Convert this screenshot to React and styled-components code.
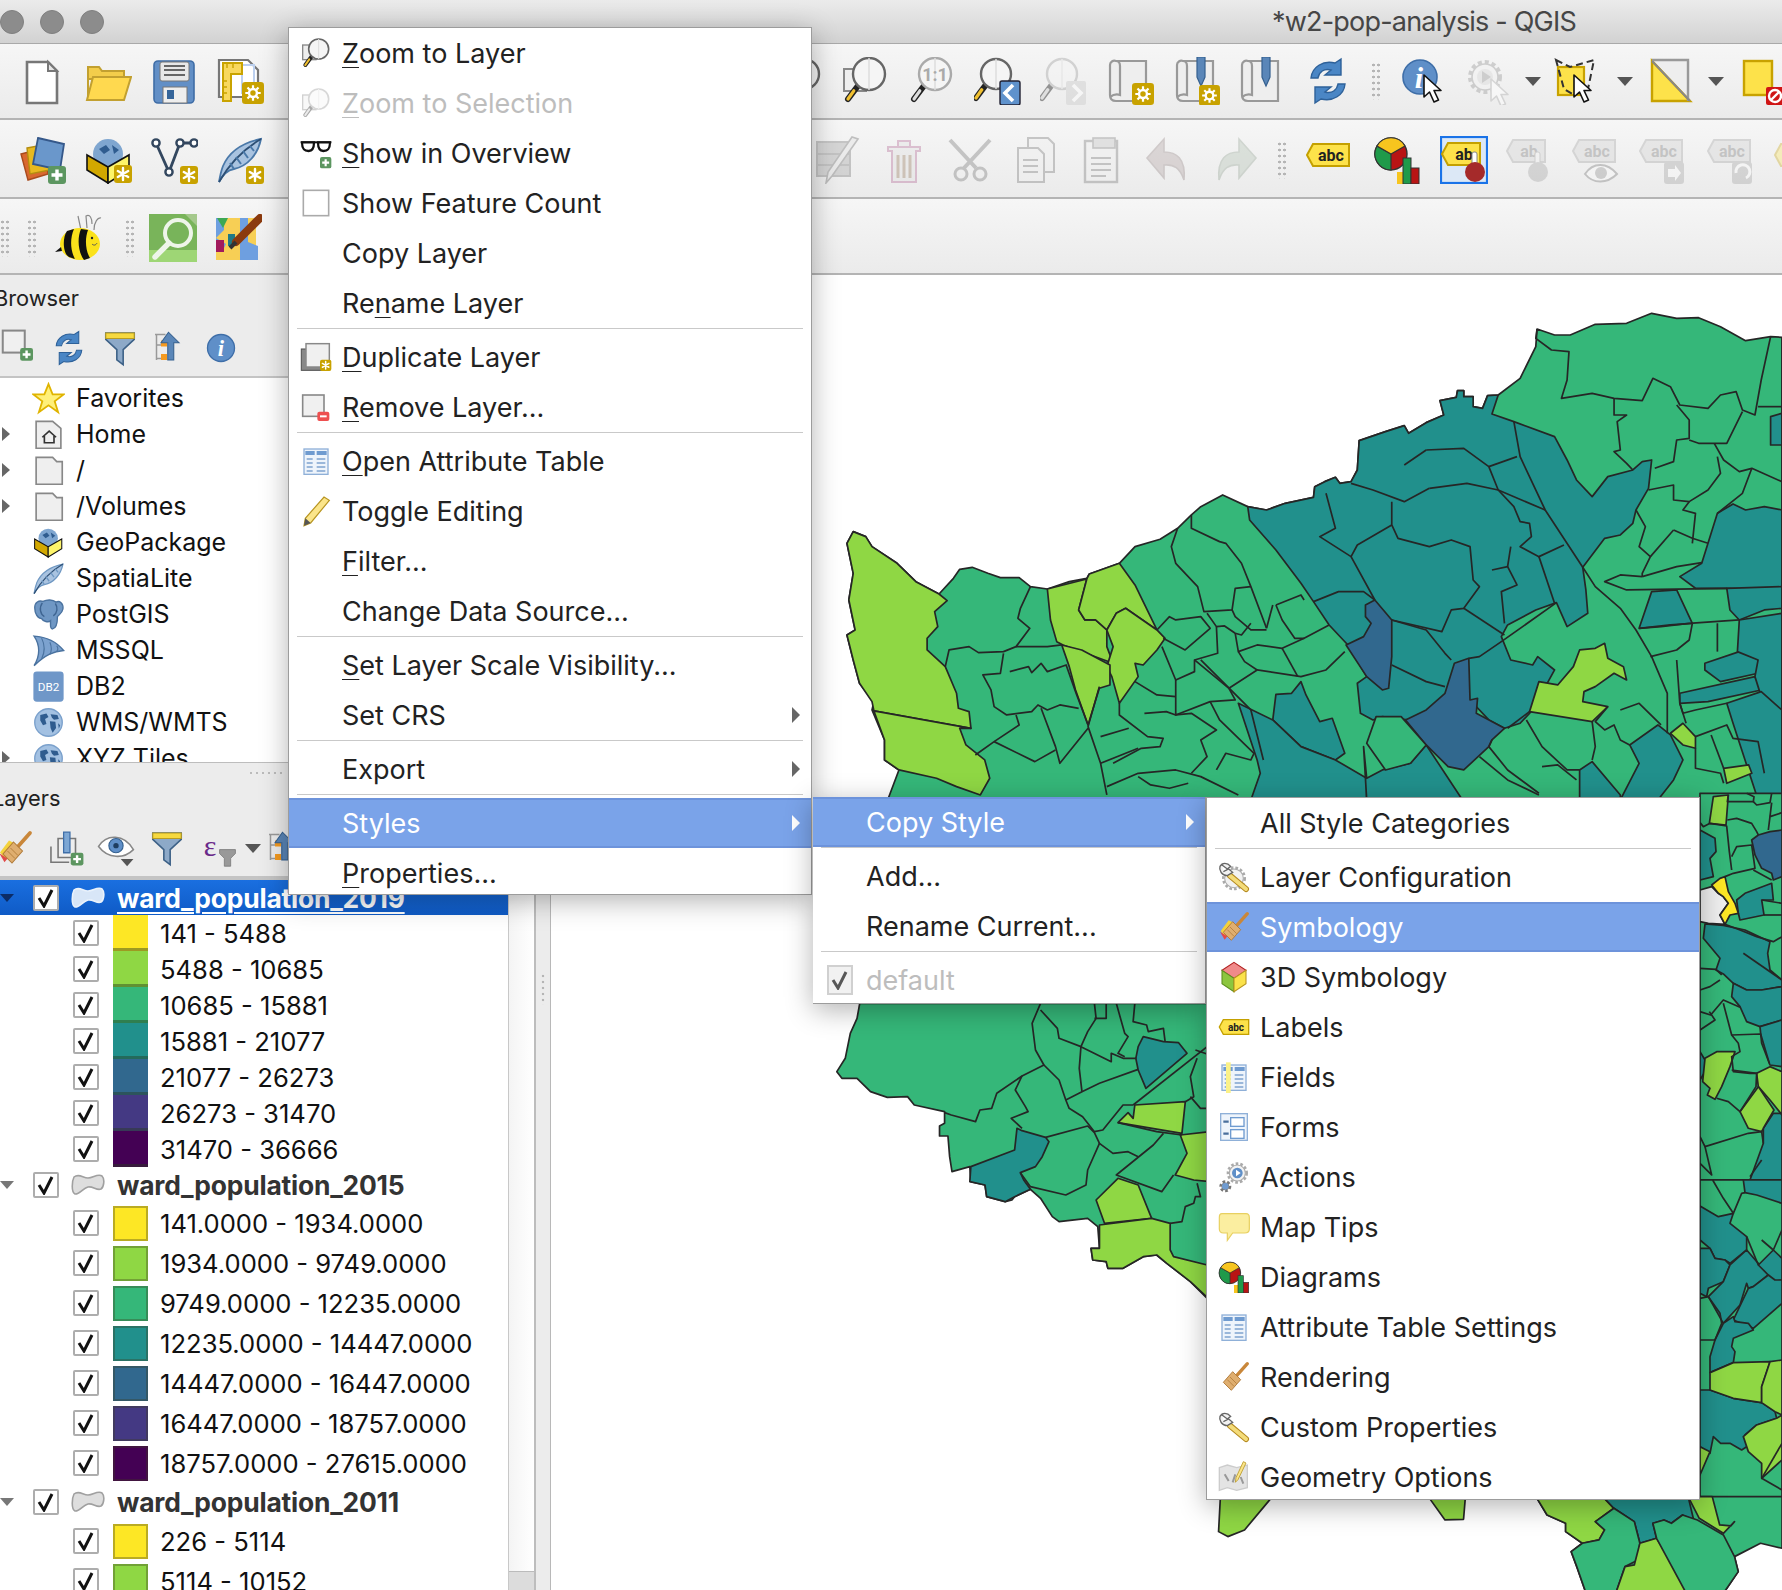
import React from "react";
import styled, { createGlobalStyle } from "styled-components";

const GlobalStyle = createGlobalStyle`
  html, body {
    margin: 0;
    padding: 0;
    width: 1782px;
    height: 1590px;
    overflow: hidden;
    background: #ececec;
    font-family: "Inter", "Liberation Sans", sans-serif;
  }
`;

/* ---------- icon helpers ---------- */

const Ico = ({ size = 48, children, dim }) => (
  <svg width={size} height={size} viewBox="0 0 48 48" opacity={dim ? 0.32 : 1}>
    {children}
  </svg>
);

const Badge = ({ x = 28, y = 28, s = 18 }) => (
  <g transform={`translate(${x} ${y}) scale(${s / 18})`}>
    <rect width="18" height="18" rx="3" fill="#c8a200" />
    <path d="M9 3V15M3.8 6L14.2 12M14.2 6L3.8 12" stroke="#fff" strokeWidth="2.4" strokeLinecap="round" />
  </g>
);

const GearBadge = ({ x = 28, y = 28, s = 20 }) => (
  <g transform={`translate(${x} ${y}) scale(${s / 20})`}>
    <rect width="20" height="20" rx="3" fill="#c8a200" />
    <circle cx="10" cy="10" r="3.6" fill="none" stroke="#fff" strokeWidth="2.2" />
    <path d="M10 3V6M10 14V17M3 10H6M14 10H17M5 5L7 7M13 13L15 15M15 5L13 7M7 13L5 15" stroke="#fff" strokeWidth="2" />
  </g>
);

const PlusBadge = ({ x = 30, y = 30, s = 18 }) => (
  <g transform={`translate(${x} ${y}) scale(${s / 18})`}>
    <rect width="18" height="18" rx="3" fill="#5c9660" />
    <path d="M9 3.5V14.5M3.5 9H14.5" stroke="#fff" strokeWidth="3.4" />
  </g>
);

const Cursor = ({ x = 22, y = 20, s = 1, gray }) => (
  <path
    transform={`translate(${x} ${y}) scale(${s})`}
    d="M0 0V22L5.5 17L10 27L14.5 25L10 15.5H17Z"
    fill="#fff"
    stroke={gray ? "#bbb" : "#111"}
    strokeWidth="1.6"
    strokeLinejoin="round"
  />
);

const Mag = ({ cx = 28, cy = 18, r = 15, stroke = "#666", grip = "#f0c030" }) => (
  <g>
    <path d={`M${cx - r * 0.7} ${cy + r * 0.75}L${cx - r - 5} ${cy + r + 9}`} stroke="#222" strokeWidth="6" strokeLinecap="round" />
    <path d={`M${cx - r * 0.95} ${cy + r * 1.05}L${cx - r - 5} ${cy + r + 9}`} stroke={grip} strokeWidth="3.2" strokeLinecap="round" />
    <circle cx={cx} cy={cy} r={r} fill="#f5f5f5" stroke={stroke} strokeWidth="2.4" />
    <path d={`M${cx} ${cy - r}V${cy + r}`} stroke="#ddd" strokeWidth="1.5" />
  </g>
);

const Tag = ({ label = "abc", x = 3, y = 10, fill = "#fde24a", line = "#c4a000", ink = "#222", w = 42, size = 16 }) => (
  <g transform={`translate(${x} ${y})`}>
    <path d={`M6 0H${w}V22H6L0 11Z`} fill={fill} stroke={line} strokeWidth="2" />
    <text x={w / 2 + 3} y="16.5" textAnchor="middle" fontFamily="Roboto, sans-serif" fontWeight="700" fontSize={size} fill={ink}>
      {label}
    </text>
  </g>
);

const Globe = ({ cx = 24, cy = 24, r = 20 }) => (
  <g>
    <circle cx={cx} cy={cy} r={r} fill="#a3c1e2" stroke="#7ba1cc" strokeWidth="2" />
    <path
      transform={`translate(${cx - 20} ${cy - 20}) scale(${r / 20})`}
      d="M8 9L17 7L20 12L15 15L17 22L12 24L8 17ZM23 8L33 9L35 15L28 16L25 13ZM22 18L30 19L31 28L26 35L23 28ZM34 21L37 24L35 29Z"
      fill="#2f5c8f"
    />
  </g>
);

const Box = ({ s = 1, x = 0, y = 0 }) => (
  <g transform={`translate(${x} ${y}) scale(${s})`}>
    <circle cx="24" cy="18" r="15" fill="#7fa6d0" />
    <path d="M15 13L22 9L26 14L20 18ZM28 9L35 14L30 18Z" fill="#2f5c8f" />
    <path d="M3 19L24 31V47L3 34Z" fill="#d2a800" stroke="#111" strokeWidth="1.6" />
    <path d="M24 31L45 19V34L24 47Z" fill="#fdf46a" stroke="#111" strokeWidth="1.6" />
  </g>
);

const Feather = ({ tone = "#4a78a8" }) => (
  <g>
    <path d="M45 3C30 6 14 14 7 30C5 35 4 40 3 46C7 38 12 34 18 33C32 30 42 18 45 3Z" fill="#a9c3e0" stroke={tone} strokeWidth="1.8" />
    <path d="M3 46C12 30 26 14 45 3" stroke="#2d4f74" strokeWidth="1.8" fill="none" />
    <path d="M14 27L18 33M20 21L25 28M27 15L32 22M34 10L38 15" stroke={tone} strokeWidth="2" />
  </g>
);

const Funnel = () => (
  <g>
    <path d="M6 5H42V13L28 26V45L20 39V26L6 13Z" fill="#8da9c8" stroke="#3d6187" strokeWidth="2" />
    <path d="M6 5H42V12H6Z" fill="#f6d93f" stroke="#b89c20" strokeWidth="1.4" />
  </g>
);

const Refresh = () => (
  <g fill="#4a86c5" stroke="#2e6199" strokeWidth="1.4">
    <path d="M7 21C8 10 19 3 31 6L37 2V18H21L27 13C20 11 15 15 14 21Z" />
    <path d="M41 27C40 38 29 45 17 42L11 46V30H27L21 35C28 37 33 33 34 27Z" />
  </g>
);

const Brush = ({ color }) => (
  <g>
    {color && <path d="M4 30L16 14L24 18L12 40Z" fill="#f4d23c" />}
    {color && <path d="M3 31L14 38L10 43Z" fill="#e24a4a" />}
    <path d="M44 4L28 22" stroke="#c9873a" strokeWidth="5" strokeLinecap="round" />
    <path d="M22 16L34 28L20 44L8 32Z" fill="#dfae6f" stroke="#b07a38" strokeWidth="1.4" />
    <path d="M14 28L24 38M18 24L28 34" stroke="#b07a38" strokeWidth="1.2" />
  </g>
);

const Wrench = () => (
  <g>
    <path d="M18 22L42 42" stroke="#b58a20" strokeWidth="9" strokeLinecap="round" />
    <path d="M18 22L42 42" stroke="#f4dc7a" strokeWidth="6" strokeLinecap="round" />
    <path d="M6 6L14 12L19 8C14 2 6 2 3 8C1 14 6 22 14 22L22 17L16 12L8 16" fill="#f2f2f2" stroke="#666" strokeWidth="2" />
  </g>
);

const Gear = ({ cx = 24, cy = 24, r = 14, color = "#aaa" }) => (
  <g>
    <circle cx={cx} cy={cy} r={r + 2} fill="none" stroke={color} strokeWidth="4" strokeDasharray="4 3" />
    <circle cx={cx} cy={cy} r={r} fill="#f2f2f2" stroke={color} strokeWidth="1.6" />
  </g>
);

const Table = () => (
  <g>
    <rect x="6" y="6" width="36" height="38" fill="#eef4fb" stroke="#8fb0d8" strokeWidth="2" />
    <path d="M8 9H22V15H8ZM25 9H40V15H25Z" fill="#6f9bd0" />
    <path d="M10 21H19M25 21H38M10 27H19M25 27H38M10 33H19M25 33H38M10 39H19M25 39H38" stroke="#7fa3cf" strokeWidth="2" />
  </g>
);

const Pie = () => (
  <g>
    <circle cx="18" cy="18" r="16" fill="#b81414" stroke="#333" strokeWidth="1.4" />
    <path d="M18 18L4 10A16 16 0 0 0 18 34Z" fill="#1f9a4a" stroke="#333" strokeWidth="1.2" />
    <path d="M18 18L4 10A16 16 0 0 1 32 10Z" fill="#f7c51e" stroke="#333" strokeWidth="1.2" />
    <rect x="24" y="36" width="6" height="12" fill="#f7c51e" />
    <rect x="30" y="22" width="8" height="26" fill="#1f9a4a" stroke="#333" strokeWidth="1" />
    <rect x="38" y="32" width="8" height="16" fill="#b81414" stroke="#333" strokeWidth="1" />
  </g>
);

const Scroll = ({ children }) => (
  <g>
    <path d="M10 4H40V44H10C6 44 4 42 4 38V8C4 5 7 3 10 4Z" fill="#eee" stroke="#999" strokeWidth="2.2" />
    <path d="M10 4C13 4 14 6 14 9V38C11 37 8 37 4 40" fill="none" stroke="#999" strokeWidth="2.2" />
    {children}
  </g>
);

const Pin = () => <path d="M24 0H32V20L28 29L24 20Z" fill="#5a86b8" stroke="#35608f" strokeWidth="1.2" />;

const MapPencil = () => (
  <g>
    <rect x="2" y="4" width="40" height="42" fill="#f7cf55" />
    <path d="M2 4H10V16L2 24ZM2 24V38H8L12 30ZM26 4L34 4L34 28L44 32V46H26Z" fill="#6e9fe0" />
    <path d="M2 26H10V38H2Z" fill="#a11a5c" />
    <path d="M3 4H14L9 14Z" fill="#3da854" />
    <rect x="14" y="20" width="7" height="12" fill="#1f7a86" />
    <path d="M46 4L22 28" stroke="#8b3a0e" strokeWidth="8" strokeLinecap="round" />
    <path d="M22 28L16 34" stroke="#333" strokeWidth="4" />
  </g>
);

const Blob = ({ light }) => (
  <svg width="34" height="24" viewBox="0 0 34 24">
    <path
      d="M3 4C8 0 12 5 17 5C22 5 27 0 31 3C34 6 33 14 30 16C26 18 22 13 17 14C12 15 8 22 4 21C0 19 1 8 3 4Z"
      fill={light ? "#d8e6f7" : "#dedede"}
      stroke={light ? "#eaf2fb" : "#a0a0a0"}
      strokeWidth="1.6"
    />
  </svg>
);

const Check = () => (
  <svg width="18" height="20" viewBox="0 0 18 20">
    <path d="M2 10L7 18L15 2" fill="none" stroke="#111" strokeWidth="3" />
  </svg>
);

const icons = {
  newDoc: (
    <>
      <path d="M9 5H30L39 14V46H9Z" fill="#fff" stroke="#777" strokeWidth="2.6" />
      <path d="M30 5V14H39Z" fill="#e6e6e6" stroke="#777" strokeWidth="2" />
    </>
  ),
  folder: (
    <>
      <path d="M4 10H15L18 14H40V22H4V42Z" fill="#f3cd4b" stroke="#c2a030" strokeWidth="2" />
      <path d="M9 20H47L40 43H3Z" fill="#ffd94f" stroke="#c2a030" strokeWidth="2" />
    </>
  ),
  save: (
    <>
      <rect x="4" y="4" width="40" height="42" rx="4" fill="#628fc6" stroke="#3f6da6" strokeWidth="1.6" />
      <rect x="10" y="5" width="29" height="19" rx="2" fill="#e8e8e8" stroke="#777" />
      <path d="M14 9H35M14 13H35M14 18H35" stroke="#666" strokeWidth="1.8" />
      <rect x="13" y="30" width="24" height="16" fill="#eee" stroke="#777" />
      <rect x="17" y="33" width="7" height="9" fill="#35659a" />
    </>
  ),
  layout: (
    <>
      <path d="M3 3H32L42 13V40H3Z" fill="#fff" stroke="#777" strokeWidth="2.2" />
      <path d="M26 8H38V36H26Z" fill="none" stroke="#bcd0ef" strokeWidth="2" />
      <path d="M7 6H26V17H15V44H7Z" fill="#f8d85e" stroke="#c9a300" strokeWidth="2" />
      <path d="M7 24H11M7 30H11M7 36H11M11 7V11M17 7V11" stroke="#c9a300" strokeWidth="1.4" />
      <GearBadge x={26} y={25} s={22} />
    </>
  ),
  zoomIn: <Mag cx={29} cy={17} r={15} />,
  zoomFull: (
    <>
      <rect x="3" y="12" width="22" height="22" fill="#eee" stroke="#888" strokeWidth="2" />
      <Mag cx={28} cy={17} r={16} />
    </>
  ),
  zoom11: (
    <>
      <Mag cx={28} cy={17} r={16} stroke="#aaa" grip="#ddd" />
      <text x="28" y="24" textAnchor="middle" fontFamily="Roboto, sans-serif" fontSize="18" fontWeight="700" fill="#aaa">
        1:1
      </text>
    </>
  ),
  zoomLast: (
    <>
      <Mag cx={22} cy={17} r={15} />
      <rect x="26" y="24" width="20" height="24" rx="2" fill="#5f92cc" stroke="#223" strokeWidth="1.4" />
      <path d="M39 28L31 36L39 44" fill="none" stroke="#fff" strokeWidth="3.6" />
    </>
  ),
  zoomNext: (
    <g opacity="0.45">
      <Mag cx={22} cy={17} r={15} stroke="#aaa" grip="#ccc" />
      <rect x="26" y="24" width="20" height="24" rx="2" fill="#ccc" />
      <path d="M33 28L41 36L33 44" fill="none" stroke="#fff" strokeWidth="3.6" />
    </g>
  ),
  scrollNew: (
    <Scroll>
      <GearBadge x={26} y={26} s={22} />
    </Scroll>
  ),
  scrollPin: (
    <Scroll>
      <Pin />
      <GearBadge x={26} y={28} s={21} />
    </Scroll>
  ),
  scrollBook: (
    <Scroll>
      <Pin />
    </Scroll>
  ),
  refresh: <Refresh />,
  identify: (
    <>
      <circle cx="20" cy="20" r="17" fill="#5f8fc8" stroke="#3e6ea8" strokeWidth="1.6" />
      <text x="19" y="31" textAnchor="middle" fontFamily="Liberation Serif, serif" fontStyle="italic" fontWeight="700" fontSize="30" fill="#fff">
        i
      </text>
      <Cursor x={24} y={18} />
    </>
  ),
  action: (
    <g opacity="0.5">
      <Gear cx={20} cy={20} r={13} />
      <circle cx="20" cy="20" r="8" fill="#ddd" />
      <path d="M17 14L26 20L17 26Z" fill="#aaa" />
      <Cursor x={26} y={22} gray />
    </g>
  ),
  select: (
    <>
      <rect x="4" y="10" width="26" height="28" fill="#fde24a" stroke="#c8a200" strokeWidth="2.2" />
      <path d="M2 3L16 10L40 3L34 32L20 38L10 32Z" fill="none" stroke="#333" strokeWidth="2" strokeDasharray="7 4" />
      <Cursor x={20} y={18} />
    </>
  ),
  deselect: (
    <>
      <path d="M4 4H42V44Z" fill="#eee" />
      <path d="M4 4V44H42Z" fill="#fde24a" stroke="#c8a200" strokeWidth="2.4" />
      <path d="M4 3H40V44" fill="none" stroke="#999" strokeWidth="2.4" />
      <path d="M4 4L42 44" stroke="#888" strokeWidth="2" />
    </>
  ),
  yellowStop: (
    <>
      <rect x="8" y="4" width="28" height="34" fill="#fde24a" stroke="#c8a200" strokeWidth="2.4" />
      <rect x="30" y="30" width="18" height="18" rx="2" fill="#d01515" />
      <circle cx="39" cy="39" r="6" fill="none" stroke="#fff" strokeWidth="2.4" />
      <path d="M35 43L43 35" stroke="#fff" strokeWidth="2.4" />
    </>
  ),
  dataSource: (
    <>
      <path d="M3 18L26 12L30 38L10 44Z" fill="#d9682f" stroke="#a84b1d" strokeWidth="1.4" />
      <path d="M9 12L30 8L32 34L12 38Z" fill="#e7b91f" stroke="#b48d10" strokeWidth="1.4" />
      <path d="M20 2L46 8L42 34L15 28Z" fill="#6a97cb" stroke="#35588a" strokeWidth="1.8" />
      <PlusBadge x={30} y={30} s={18} />
    </>
  ),
  geoNew: (
    <>
      <Box />
      <Badge x={30} y={29} s={18} />
    </>
  ),
  vertex: (
    <>
      <path d="M6 7L19 36L30 7H44" fill="none" stroke="#33475f" strokeWidth="2.8" />
      <g fill="#fff" stroke="#33475f" strokeWidth="2.4">
        <circle cx="6" cy="7" r="3.6" />
        <circle cx="19" cy="36" r="3.6" />
        <circle cx="30" cy="7" r="3.6" />
        <circle cx="44" cy="7" r="3.6" />
      </g>
      <Badge x={30} y={30} s={18} />
    </>
  ),
  featherNew: (
    <>
      <Feather />
      <Badge x={30} y={30} s={18} />
    </>
  ),
  edits: (
    <>
      <path d="M3 6H36V40H3ZM3 18H36M3 29H36" fill="#999" stroke="#666" strokeWidth="2" />
      <path d="M44 3L18 40L12 47L14 36L38 1Z" fill="#ddd" stroke="#555" strokeWidth="1.6" />
    </>
  ),
  trash: (
    <>
      <path d="M8 11H40V15H36V46H12V15H8ZM18 11V5H30V11" fill="#ddd" stroke="#a58" strokeWidth="2" />
      <path d="M18 19V42M24 19V42M30 19V42" stroke="#864" strokeWidth="3" />
    </>
  ),
  scissors: (
    <>
      <path d="M4 4L30 32M44 4L18 32" stroke="#666" strokeWidth="4" />
      <circle cx="15" cy="38" r="6" fill="none" stroke="#666" strokeWidth="3" />
      <circle cx="34" cy="38" r="6" fill="none" stroke="#666" strokeWidth="3" />
    </>
  ),
  copy: (
    <>
      <path d="M16 2H36L42 8V36H16Z" fill="#eee" stroke="#666" strokeWidth="2" />
      <path d="M6 12H26L32 18V46H6Z" fill="#eee" stroke="#666" strokeWidth="2" />
      <path d="M11 24H26M11 30H26M11 36H26" stroke="#666" strokeWidth="2" />
    </>
  ),
  paste: (
    <>
      <rect x="7" y="5" width="32" height="41" fill="#eee" stroke="#666" strokeWidth="2.4" />
      <rect x="15" y="2" width="22" height="10" fill="#bbb" stroke="#666" strokeWidth="1.6" />
      <path d="M13 22H33M13 28H33M13 34H33M13 40H28" stroke="#666" strokeWidth="2" />
    </>
  ),
  undo: <path d="M20 3V16C32 16 42 22 40 44C36 32 30 28 20 29V42L3 22Z" fill="#a99" stroke="#877" strokeWidth="1.6" />,
  redo: <path d="M28 3V16C16 16 6 22 8 44C12 32 18 28 28 29V42L45 22Z" fill="#aba" stroke="#898" strokeWidth="1.6" />,
  abc: <Tag x={2} y={8} />,
  diagram: <Pie />,
  abPin: (
    <>
      <rect x="1" y="1" width="46" height="46" fill="#dce8f6" stroke="#1a73e8" strokeWidth="2.2" />
      <Tag label="ab" x={2} y={7} w={38} />
      <rect x="32" y="16" width="5" height="14" rx="2" fill="#fff" stroke="#888" />
      <circle cx="35" cy="36" r="10" fill="#a52a2a" />
    </>
  ),
  abGray: (
    <>
      <Tag label="ab" x={2} y={4} w={38} fill="#ccc" line="#999" ink="#666" />
      <rect x="30" y="16" width="5" height="14" rx="2" fill="#eee" stroke="#888" />
      <circle cx="33" cy="36" r="10" fill="#999" />
    </>
  ),
  abcEye: (
    <>
      <Tag x={2} y={4} fill="#ccc" line="#999" ink="#666" />
      <path d="M14 38C22 26 36 26 46 38C36 48 22 48 14 38Z" fill="#fff" stroke="#666" strokeWidth="2" />
      <circle cx="30" cy="37" r="6" fill="#888" />
    </>
  ),
  abcArrow: (
    <>
      <Tag x={2} y={4} fill="#ccc" line="#999" ink="#666" />
      <rect x="26" y="26" width="20" height="22" rx="3" fill="#999" />
      <path d="M30 33H37V29L43 37L37 45V41H30Z" fill="#fff" />
    </>
  ),
  abcTurn: (
    <>
      <Tag x={2} y={4} fill="#ccc" line="#999" ink="#666" />
      <rect x="26" y="26" width="20" height="22" rx="3" fill="#999" />
      <path d="M40 42A7 7 0 1 0 30 37" fill="none" stroke="#fff" strokeWidth="3" />
    </>
  ),
  bee: (
    <>
      <path d="M27 16L24 2M33 14L32 2C36 0 38 4 38 10M40 16C40 8 44 3 47 4" fill="none" stroke="#888" strokeWidth="1.2" />
      <ellipse cx="26" cy="30" rx="20" ry="16" fill="#fbe21b" />
      <path d="M13 17C8 24 9 40 15 43L21 45C16 36 16 24 20 15ZM27 15C23 24 24 38 30 46L36 44C31 36 31 24 34 16Z" fill="#111" />
      <path d="M7 33L1 38L8 37Z" fill="#111" />
      <circle cx="38" cy="24" r="1.2" fill="#222" />
      <path d="M38 30C40 32 42 31 43 29" fill="none" stroke="#555" />
    </>
  ),
  greenSearch: (
    <>
      <rect width="48" height="48" fill="#79b45a" />
      <path d="M0 48V36L48 36V48Z" fill="#9ed675" />
      <path d="M48 0V12L36 0Z" fill="#a5c98c" />
      <circle cx="29" cy="19" r="13" fill="#79b45a" fillOpacity="0.4" stroke="#eef5ea" strokeWidth="4" />
      <path d="M20 29L6 43" stroke="#eef5ea" strokeWidth="5.4" strokeLinecap="round" />
    </>
  ),
  mapPencil: <MapPencil />,
  addSquare: (
    <>
      <rect x="3" y="5" width="24" height="24" fill="#f0f0f0" stroke="#888" strokeWidth="2.2" />
      <PlusBadge x={22} y={24} s={14} />
    </>
  ),
  funnel: <Funnel />,
  treeUp: (
    <>
      <path d="M4 6H18M6 6V40M6 20H12M6 38H12" fill="none" stroke="#999" strokeWidth="2" />
      <rect x="12" y="14" width="8" height="8" fill="#f49a20" />
      <rect x="12" y="32" width="8" height="8" fill="#f49a20" />
      <path d="M22 3L36 17H29V40H21V17H12Z" fill="#5a86b8" stroke="#35608f" strokeWidth="1.4" />
    </>
  ),
  info: (
    <>
      <circle cx="24" cy="24" r="18" fill="#5f8fc8" stroke="#3e6ea8" strokeWidth="1.8" />
      <text x="24" y="34" textAnchor="middle" fontFamily="Liberation Serif, serif" fontStyle="italic" fontWeight="700" fontSize="30" fill="#fff">
        i
      </text>
    </>
  ),
  star: <path d="M24 3L30 18H46L33 28L38 44L24 34L10 44L15 28L2 18H18Z" fill="#fff07a" stroke="#e0b400" strokeWidth="2.6" />,
  folderHome: (
    <>
      <path d="M6 5H30L42 15V44H6Z" fill="#efefef" stroke="#888" strokeWidth="2.4" />
      <path d="M15 28L25 19L35 28M18 26V36H32V26" fill="none" stroke="#333" strokeWidth="2.4" />
    </>
  ),
  folderPlain: <path d="M6 5H30L36 11H44V44H6Z" fill="#efefef" stroke="#888" strokeWidth="2.4" />,
  geoSmall: <Box s={0.94} x={1} y={1} />,
  featherPale: <Feather tone="#6e97c2" />,
  elephant: (
    <>
      <path
        d="M4 14C4 6 10 3 16 5C22 2 30 2 35 6C40 3 46 8 45 16C44 22 39 24 37 27C37 34 36 44 30 45C26 45 27 38 27 33C24 36 16 34 14 30C8 30 4 22 4 14Z"
        fill="#6f97c4"
        stroke="#4a729f"
        strokeWidth="2"
      />
      <path d="M15 7C10 14 12 24 18 27M34 8C38 14 37 22 31 26" fill="none" stroke="#3e6491" strokeWidth="2" />
    </>
  ),
  sail: (
    <>
      <path d="M3 3C18 4 34 9 46 24C32 25 20 30 3 46C12 32 12 16 3 3Z" fill="#7ca2cf" stroke="#4a729f" strokeWidth="2" />
      <path d="M14 6C19 16 19 26 14 36M26 12C29 19 28 26 26 30M36 17C38 20 38 23 36 25" fill="none" stroke="#4a729f" strokeWidth="1.6" />
    </>
  ),
  db2: (
    <>
      <rect x="2" y="2" width="44" height="44" rx="5" fill="#6f97c8" />
      <text x="24" y="30" textAnchor="middle" fontFamily="Roboto, sans-serif" fontSize="17" fill="#fff">
        DB2
      </text>
    </>
  ),
  globe: <Globe />,
  brush: <Brush color />,
  attrAdd: (
    <>
      <path d="M14 12H36V36H14Z" fill="#eee" stroke="#777" strokeWidth="2" />
      <path d="M5 22V42H28" fill="none" stroke="#777" strokeWidth="2" />
      <path d="M21 4H29V30H21Z" fill="#7da7d4" stroke="#3e6ea8" strokeWidth="1.6" />
      <PlusBadge x={30} y={30} s={16} />
    </>
  ),
  eye: (
    <>
      <path d="M2 22C12 6 34 6 46 26C34 38 14 38 2 22Z" fill="#fff" stroke="#888" strokeWidth="2" />
      <circle cx="24" cy="21" r="9" fill="#5f8fc8" stroke="#34608f" strokeWidth="1.4" />
      <circle cx="24" cy="21" r="3.4" fill="#1e3d60" />
      <path d="M30 38H46L38 47Z" fill="#555" />
    </>
  ),
  expr: (
    <>
      <text x="14" y="34" textAnchor="middle" fontFamily="Liberation Serif, serif" fontSize="38" fill="#6a2a8a">
        ε
      </text>
      <path d="M26 26H46V31L40 37V47H32V37L26 31Z" fill="#999" stroke="#777" />
    </>
  ),
  zoomLayerMenu: (
    <>
      <rect x="4" y="12" width="20" height="22" fill="#eee" stroke="#888" strokeWidth="2" />
      <Mag cx={28} cy={18} r={15} />
    </>
  ),
  zoomSelMenu: (
    <g opacity="0.38">
      <rect x="4" y="12" width="20" height="22" fill="#eee" stroke="#888" strokeWidth="2" />
      <Mag cx={28} cy={18} r={15} stroke="#999" grip="#ccc" />
    </g>
  ),
  glasses: (
    <>
      <path d="M1 8H47" stroke="#111" strokeWidth="3" />
      <path d="M3 8C3 20 8 21 13 21C20 21 21 14 21 8ZM27 8C27 14 28 21 35 21C40 21 45 20 45 8Z" fill="#fff" stroke="#111" strokeWidth="3.4" />
      <PlusBadge x={30} y={30} s={17} />
    </>
  ),
  square: <rect x="5" y="5" width="38" height="38" fill="#fff" stroke="#aaa" strokeWidth="2.4" />,
  duplicate: (
    <>
      <rect x="2" y="12" width="34" height="32" fill="#888" stroke="#555" strokeWidth="1.6" />
      <rect x="9" y="4" width="35" height="35" fill="#f0f0f0" stroke="#888" strokeWidth="2.2" />
      <Badge x={30} y={28} s={17} />
    </>
  ),
  remove: (
    <>
      <rect x="4" y="6" width="32" height="32" fill="#f0f0f0" stroke="#888" strokeWidth="2.4" />
      <rect x="26" y="31" width="18" height="14" rx="3" fill="#ee5050" />
      <path d="M30 38H40" stroke="#fff" strokeWidth="3" />
    </>
  ),
  table: <Table />,
  pencil: (
    <>
      <path d="M36 3L44 8L16 42L6 46L8 35Z" fill="#fbe58a" stroke="#b89520" strokeWidth="1.8" />
      <path d="M8 35L16 42L6 46Z" fill="#555" />
    </>
  ),
  layerConfig: (
    <>
      <Gear cx={24} cy={26} r={14} />
      <Wrench />
    </>
  ),
  cube: (
    <>
      <path d="M24 2L42 14L24 26L6 14Z" fill="#f08a8a" stroke="#b02020" strokeWidth="1.6" />
      <path d="M6 14L24 26V46L6 34Z" fill="#8cc63f" stroke="#5d8f20" strokeWidth="1.6" />
      <path d="M42 14L24 26V46L42 34Z" fill="#fbe24a" stroke="#b89520" strokeWidth="1.6" />
    </>
  ),
  labels: <Tag x={2} y={13} w={44} size={15} />,
  fields: (
    <>
      <Table />
      <rect x="12" y="2" width="7" height="46" fill="#fbf188" />
    </>
  ),
  forms: (
    <>
      <rect x="4" y="4" width="40" height="40" fill="#eef4fb" stroke="#8fb0d8" strokeWidth="2" />
      <rect x="19" y="10" width="20" height="13" fill="#fff" stroke="#6f9bd0" strokeWidth="2" />
      <rect x="19" y="28" width="20" height="13" fill="#fff" stroke="#6f9bd0" strokeWidth="2" />
      <path d="M8 16H16M8 34H16" stroke="#4a6f9c" strokeWidth="3.6" />
    </>
  ),
  actions: (
    <>
      <Gear cx={29} cy={18} r={12} />
      <circle cx="29" cy="18" r="8" fill="#5f8fc8" />
      <path d="M27 13L34 18L27 23Z" fill="#fff" />
      <Gear cx={11} cy={38} r={5} color="#777" />
      <circle cx="11" cy="38" r="5" fill="#6f9bd0" />
    </>
  ),
  bubble: <path d="M6 4H42C46 4 47 7 47 10V27C47 31 44 33 40 33H22L14 44V33H8C4 33 2 30 2 27V10C2 6 3 4 6 4Z" fill="#fbeea0" stroke="#e8d060" strokeWidth="1.8" />,
  broom: <Brush />,
  wrench: <Wrench />,
  geomOpts: (
    <>
      <path d="M2 10L14 6L28 10L44 6V40L28 44L14 40L2 44Z" fill="#e4e4e4" stroke="#ccc" strokeWidth="2" />
      <path d="M10 20L16 30M26 20L22 32M34 24L38 34" stroke="#999" strokeWidth="3" />
      <path d="M42 3L30 28L26 32L27 25L38 1Z" fill="#fbe58a" stroke="#b89520" strokeWidth="1.2" />
    </>
  ),
};

const Icon = ({ name, size = 48, dim }) => (
  <Ico size={size} dim={dim}>
    {icons[name]}
  </Ico>
);

/* ---------- shell ---------- */

const Page = styled.div`
  position: relative;
  width: 1782px;
  height: 1590px;
  overflow: hidden;
  display: flex;
  flex-direction: column;
  background: #ececec;
`;

const TitleBar = styled.div`
  flex: 0 0 43px;
  display: flex;
  align-items: center;
  background: linear-gradient(#ebebeb, #d2d2d2);
  border-bottom: 1px solid #a9a9a9;
`;

const Lights = styled.div`
  display: flex;
  gap: 16px;
`;

const Light = styled.span`
  width: 24px;
  height: 24px;
  border-radius: 50%;
  background: #8c8c8c;
  border: 1px solid #808080;
  box-sizing: border-box;
`;

const Title = styled.div`
  margin-left: 1168px;
  font-size: 27px;
  color: #464646;
  letter-spacing: -0.8px;
  white-space: nowrap;
`;

const ToolRow = styled.div`
  flex: 0 0 ${(p) => p.$h}px;
  box-sizing: border-box;
  display: flex;
  align-items: center;
  padding-left: ${(p) => p.$pad || 0}px;
  padding-top: ${(p) => p.$top || 0}px;
  background: linear-gradient(#f6f6f6, #ebebeb);
  border-bottom: 2px solid #b4b4b4;
  overflow: hidden;
`;

const Tool = styled.div`
  flex: 0 0 ${(p) => p.$w || 66}px;
  display: flex;
  justify-content: center;
  align-items: center;
`;

const Gap = styled.div`
  flex: 0 0 ${(p) => p.$w}px;
`;

const Grip = styled.div`
  flex: 0 0 10px;
  height: 38px;
  margin: 0 ${(p) => p.$m || 0}px;
  background: radial-gradient(circle, #b5b5b5 1.3px, transparent 1.6px) 0 0 / 5px 6px;
`;

const SmallArrow = styled.div`
  flex: 0 0 ${(p) => p.$w}px;
  display: flex;
  justify-content: center;
  &::before {
    content: "";
    border-left: 8px solid transparent;
    border-right: 8px solid transparent;
    border-top: 9px solid #555;
  }
`;

const Body = styled.div`
  flex: 1;
  display: flex;
  min-height: 0;
`;

const Side = styled.div`
  flex: 0 0 551px;
  display: flex;
  flex-direction: column;
  box-sizing: border-box;
  border-right: 1px solid #b8b8b8;
`;

const DockTitle = styled.div`
  flex: 0 0 ${(p) => p.$h}px;
  height: ${(p) => p.$h}px;
  display: flex;
  align-items: center;
  font-size: 21.8px;
  color: #222;
  padding-top: ${(p) => p.$top || 0}px;
  box-sizing: border-box;
  margin-left: ${(p) => p.$shift}px;
`;

const DockTools = styled.div`
  flex: 0 0 58px;
  box-sizing: border-box;
  display: flex;
  align-items: center;
  border-bottom: 2px solid #c4c4c4;
`;

const DockTool = styled.div`
  flex: 0 0 ${(p) => p.$w || 50.5}px;
  margin-left: ${(p) => p.$shift || 0}px;
  display: flex;
  justify-content: center;
  svg {
    flex-shrink: 0;
  }
`;

const BrowserTree = styled.div`
  flex: 0 0 385px;
  box-sizing: border-box;
  padding-top: 2px;
  background: #fff;
  border-bottom: 1px solid #bdbdbd;
  overflow: hidden;
`;

const TreeRow = styled.div`
  height: 36px;
  display: flex;
  align-items: center;
  font-size: 25px;
  color: #111;
  white-space: nowrap;
`;

const Disclosure = styled.div`
  flex: 0 0 30px;
  &::before {
    content: "";
    display: ${(p) => (p.$on ? "block" : "none")};
    margin-left: 2px;
    width: 0;
    border-top: 7px solid transparent;
    border-bottom: 7px solid transparent;
    border-left: 8px solid #666;
  }
`;

const TreeIcon = styled.div`
  flex: 0 0 37px;
  display: flex;
  justify-content: center;
  margin-right: 9px;
`;

const LayerPane = styled.div`
  flex: 1;
  display: flex;
  min-height: 0;
`;

const LayerList = styled.div`
  flex: 0 0 508px;
  border-top: 2px solid #c4c4c4;
  background: #fff;
  overflow: hidden;
`;

const ScrollTrack = styled.div`
  flex: 0 0 28px;
  box-sizing: border-box;
  display: flex;
  flex-direction: column;
  justify-content: flex-end;
  background: linear-gradient(90deg, #f4f4f4, #fff);
  border-left: 1px solid #c8c8c8;
  border-right: 2px solid #bdbdbd;
`;

const ScrollThumb = styled.div`
  height: 18px;
  background: #dcdcdc;
  border-top: 1px solid #bbb;
`;

const Gutter = styled.div`
  flex: 1;
  display: flex;
  align-items: flex-start;
  justify-content: center;
  padding-top: 95px;
`;

const GutterDots = styled.div`
  width: 4px;
  height: 32px;
  background: radial-gradient(circle, #b5b5b5 1.3px, transparent 1.6px) 0 0 / 4px 6px;
`;

const SplitDots = styled.div`
  position: absolute;
  left: 248px;
  top: 8px;
  width: 34px;
  height: 4px;
  background: radial-gradient(circle, #bbb 1.2px, transparent 1.5px) 0 0 / 6px 4px;
`;

const SplitHead = styled.div`
  position: relative;
  flex: 0 0 57px;
`;

const GroupRow = styled.div`
  height: ${(p) => p.$h}px;
  display: flex;
  align-items: center;
  background: ${(p) => (p.$active ? "linear-gradient(#1a6fe0, #0f5bc6)" : "transparent")};
`;

const Twisty = styled.div`
  flex: 0 0 33px;
  &::before {
    content: "";
    display: block;
    width: 0;
    margin-left: 0;
    border-left: 7px solid transparent;
    border-right: 7px solid transparent;
    border-top: 8px solid ${(p) => (p.$active ? "#0c2c66" : "#777")};
  }
`;

const CheckBox = styled.div`
  flex: 0 0 26px;
  height: 26px;
  box-sizing: border-box;
  display: flex;
  align-items: center;
  justify-content: center;
  background: #fff;
  border: 2px solid ${(p) => (p.$light ? "#d8d8d8" : "#adadad")};
  border-radius: 2px;
`;

const LayerGlyph = styled.div`
  flex: 0 0 58px;
  display: flex;
  justify-content: center;
`;

const LayerName = styled.span`
  font-weight: 700;
  font-size: 26.4px;
  letter-spacing: -0.2px;
  color: ${(p) => (p.$active ? "#fff" : "#333")};
  white-space: nowrap;
  text-decoration: ${(p) => (p.$active ? "underline" : "none")};
  text-decoration-thickness: 2px;
  text-underline-offset: 4px;
`;

const LegendRow = styled.div`
  height: ${(p) => p.$h}px;
  display: flex;
  align-items: center;
  padding-left: 73px;
`;

const Swatch = styled.div`
  flex: 0 0 35px;
  height: ${(p) => (p.$flush ? 36 : 35)}px;
  margin-left: 14px;
  box-sizing: border-box;
  background: ${(p) => p.$color};
  border: ${(p) => (p.$flush ? "none" : "2px solid rgba(60, 60, 30, 0.35)")};
  border-bottom: ${(p) => (p.$flush ? "3px solid rgba(40, 60, 30, 0.45)" : "2px solid rgba(60, 60, 30, 0.35)")};
`;

const LegendText = styled.span`
  margin-left: 12px;
  font-size: 25.6px;
  color: #111;
  white-space: nowrap;
`;

const Canvas = styled.div`
  flex: 1;
  background: #fff;
  overflow: hidden;
`;

/* ---------- menus ---------- */

const Menu = styled.div`
  position: absolute;
  left: ${(p) => p.$x}px;
  top: ${(p) => p.$y}px;
  width: ${(p) => p.$w}px;
  height: ${(p) => p.$h}px;
  box-sizing: border-box;
  background: #fff;
  overflow: hidden;
  border: 1px solid #9c9c9c;
  border-width: ${(p) => p.$edges || "1px"};
  box-shadow: 0 6px 26px rgba(0, 0, 0, 0.3);
`;

const MenuRow = styled.div`
  height: 50px;
  display: flex;
  align-items: center;
  font-size: 27px;
  white-space: nowrap;
  color: ${(p) => (p.$off ? "#bdbdbd" : p.$on ? "#fff" : "#222")};
  background: ${(p) => (p.$on ? "#7aa3e9" : "transparent")};
  box-shadow: ${(p) => (p.$on ? "inset 0 2px 0 rgba(70, 100, 180, 0.25), inset 0 -2px 0 rgba(70, 100, 180, 0.25)" : "none")};
`;

const MenuGlyph = styled.div`
  flex: 0 0 53px;
  display: flex;
  justify-content: center;
`;

const Mnemonic = styled.span`
  text-decoration: underline;
  text-decoration-thickness: 1px;
  text-underline-offset: 4px;
`;

const Chevron = styled.span`
  margin-left: auto;
  margin-right: 11px;
  border-top: 8px solid transparent;
  border-bottom: 8px solid transparent;
  border-left: 8px solid ${(p) => (p.$on ? "#fff" : "#666")};
`;

const MenuRule = styled.div`
  height: 4px;
  box-sizing: border-box;
  margin: 0 8px;
  border-top: 1px solid #c9c9c9;
`;

const Tick = styled.div`
  width: 26px;
  height: 30px;
  box-sizing: border-box;
  border: 2px solid #bdbdbd;
  background: #ececec;
  display: flex;
  align-items: center;
  justify-content: center;
  opacity: 0.7;
`;

/* ---------- map ---------- */

const GREEN = "#35b779";
const LIME = "#8fd744";
const TEAL = "#21908c";
const BLUE = "#31688e";
const GOLD = "#fde725";

const Ward = styled.polygon`
  stroke: #262626;
  stroke-width: 1.7;
  stroke-linejoin: round;
  vector-effect: non-scaling-stroke;
`;

const Border = styled.polyline`
  fill: none;
  stroke: #262626;
  stroke-width: 1.7;
  stroke-linejoin: round;
  vector-effect: non-scaling-stroke;
`;

const mapParts = [
  {
    at: "translate(800 280) scale(0.6262 0.3333)",
    wards: [
      [GREEN, "75,790 85,755 105,770 115,800 155,850 185,905 222,942 245,895 255,868 275,862 300,880 320,893 350,893 368,920 395,927 430,905 458,895 462,882 510,850 535,800 575,778 603,745 625,705 640,680 675,645 715,680 745,690 775,670 820,652 822,620 838,605 855,592 862,610 880,605 890,570 893,482 935,455 965,437 972,460 1000,428 1028,405 1022,362 1048,352 1050,332 1060,332 1060,350 1075,350 1075,380 1090,385 1098,347 1115,345 1150,295 1175,200 1177,147 1205,165 1230,165 1270,133 1320,130 1360,100 1400,115 1435,113 1470,140 1510,182 1550,170 1568,172 1568,1560 140,1560 158,1470 135,1440 135,1380 115,1290 118,1265 95,1210 85,1140 75,1065 88,1050 78,960 85,880"],
      [LIME, "75,790 85,755 105,770 115,800 155,850 185,905 222,942 235,962 215,995 220,1040 203,1075 203,1110 232,1160 250,1240 253,1285 270,1295 273,1345 118,1293 115,1265 95,1210 85,1140 75,1065 88,1050 78,960 85,880"],
      [LIME, "118,1293 273,1345 255,1345 265,1395 295,1440 303,1495 288,1545 250,1520 218,1495 158,1470 135,1440 135,1380"],
      [LIME, "395,927 458,897 445,990 455,1020 472,1020 490,1050 490,1100 500,1150 420,1095 410,1085 400,1020"],
      [LIME, "458,897 462,882 510,850 535,915 570,1050 520,985 505,1000 490,1050 472,1020 455,1020 445,990"],
      [LIME, "520,985 570,1050 583,1075 570,1110 548,1155 535,1150 540,1190 510,1270 498,1190 490,1160 500,1100 490,1050 505,1000"],
      [LIME, "418,1095 450,1110 495,1155 495,1215 478,1225 460,1335 440,1230 430,1160"],
      [TEAL, "715,680 745,690 775,670 820,652 822,620 838,605 855,592 862,610 880,605 890,570 893,482 935,455 965,437 972,460 1000,428 1028,405 1022,362 1048,352 1050,332 1060,332 1060,350 1075,350 1075,380 1090,385 1098,347 1115,345 1105,402 1140,425 1205,470 1225,540 1240,600 1265,650 1290,590 1330,570 1345,545 1360,540 1355,625 1335,690 1330,730 1310,765 1285,775 1250,862 1255,930 1258,1000 1225,1040 1208,968 1175,990 1130,1035 1120,1070 1135,1140 1170,1155 1178,1130 1205,1170 1170,1290 1150,1330 1125,1345 1100,1320 1070,1260 1040,1300 970,1320 930,1310 915,1320 895,1300 890,1210 905,1190 875,1095 845,1035 820,965 800,910 760,810 718,720"],
      [TEAL, "755,1320 760,1243 785,1240 800,1205 808,1245 830,1325 850,1315 870,1420 855,1440 800,1400"],
      [TEAL, "700,1270 755,1320 800,1400 855,1440 905,1495 905,1560 720,1560 735,1480 730,1440"],
      [TEAL, "900,1400 905,1495 930,1470 975,1450 1000,1395 1058,1560 905,1560"],
      [TEAL, "1465,700 1490,672 1510,690 1540,680 1568,690 1568,930 1480,925 1430,925 1405,890 1440,850 1450,790"],
      [TEAL, "1550,410 1568,400 1568,495 1550,495"],
      [TEAL, "1445,1150 1500,1115 1530,1130 1530,1180 1470,1205 1445,1170"],
      [TEAL, "1405,1240 1525,1190 1535,1230 1450,1265 1405,1270"],
      [TEAL, "1480,925 1568,920 1568,985 1540,990 1500,1020 1485,990"],
      [TEAL, "1340,1045 1360,935 1400,930 1425,1030 1390,1035"],
      [TEAL, "1500,1020 1568,1000 1568,1300 1535,1250 1525,1190 1530,1140 1497,1115"],
      [TEAL, "1480,1270 1535,1235 1568,1290 1568,1560 1530,1560 1490,1330"],
      [TEAL, "1325,1395 1370,1335 1390,1365 1410,1440 1395,1500 1370,1560 1310,1560 1340,1450"],
      [TEAL, "1245,1470 1265,1445 1310,1545 1310,1560 1245,1560"],
      [BLUE, "918,960 945,1020 945,1130 940,1225 930,1230 905,1190 872,1095 900,1070 912,1030 903,1010 903,975"],
      [BLUE, "1068,1135 1070,1260 1082,1255 1080,1300 1125,1345 1105,1380 1100,1400 1060,1470 1035,1460 1000,1395 967,1320 1000,1290 1030,1240 1045,1150"],
      [GREEN, "920,1310 960,1310 1000,1395 975,1450 935,1470 905,1390"],
      [LIME, "1235,1160 1245,1110 1270,1105 1285,1090 1290,1135 1315,1160 1320,1200 1300,1180 1270,1220 1252,1235 1250,1265 1290,1280 1265,1325 1165,1295 1180,1205 1210,1215"],
      [LIME, "1390,1360 1410,1330 1430,1370 1430,1405 1410,1395"],
      [LIME, "1475,1465 1515,1455 1520,1480 1480,1510"],
      [LIME, "1460,1545 1480,1545 1480,1560 1460,1560"],
    ],
    lines: [
      "232,1160 238,1110 270,1100 285,1118 325,1115 345,1100 367,1045 348,1015 352,985 368,920",
      "325,1120 320,1180 292,1185 305,1230 310,1280 330,1305 370,1295 380,1275 395,1290 415,1275 445,1285",
      "335,1175 365,1160 370,1178 385,1150 395,1175 425,1155 440,1235 460,1335",
      "345,1100 395,1100 418,1095",
      "385,1285 408,1400 415,1450 460,1345",
      "345,1305 350,1335 310,1385 280,1425",
      "310,1385 375,1445 408,1410",
      "625,705 625,745 670,785 680,790 705,850 720,920 745,1045",
      "603,745 593,800 600,850 635,920 645,995 690,990 695,925 720,920",
      "690,990 695,1010 720,1050 745,1050",
      "570,1050 590,1010 600,1020 640,1010 655,1045 615,1110 580,1075",
      "650,1000 665,1040 678,1038 695,1060 705,1065 720,1030",
      "760,975 800,945 805,960",
      "760,975 770,1020 790,1075 805,1075 845,1035",
      "755,975 745,1045",
      "695,1060 700,1115 730,1095 770,1105 805,1075",
      "665,1040 667,1120 630,1140 630,1175 600,1200 578,1100",
      "700,1115 710,1145 730,1170 800,1190 840,1170 870,1115",
      "770,1105 795,1190",
      "730,1170 685,1225 630,1140",
      "685,1225 695,1260 655,1265 600,1305 600,1200",
      "535,1205 570,1245 600,1250",
      "510,1270 510,1305 555,1370 580,1375 575,1400 545,1405 500,1450",
      "478,1220 460,1340 480,1450 490,1545",
      "550,1300 585,1295 600,1305 625,1300 665,1350 640,1380 650,1430 625,1480",
      "655,1265 670,1320 725,1420 720,1440 680,1420 665,1470",
      "480,1370 525,1345",
      "480,1450 540,1405",
      "490,1520 540,1480 600,1470 640,1490 700,1545",
      "540,1490 560,1515 590,1525 620,1510",
      "1177,147 1175,175 1200,210 1228,215 1225,300 1216,355 1265,340 1300,355 1345,362 1362,295 1390,320 1405,375 1450,385 1470,345 1495,335 1505,390 1525,405 1535,300 1550,170",
      "1530,380 1568,380",
      "1300,355 1300,405 1320,405 1305,425 1310,510 1300,515 1320,550 1330,570",
      "1400,375 1420,420 1420,475 1400,480 1395,545 1365,565",
      "1420,480 1435,490 1480,490 1505,395",
      "1460,490 1475,540 1500,575 1520,565 1568,605",
      "1465,530 1470,580 1450,630 1420,665 1395,660 1395,615 1355,630",
      "1420,665 1410,690 1430,700 1425,790",
      "1520,565 1505,640 1465,700",
      "1335,690 1350,740 1340,800 1358,830 1345,880 1345,890",
      "1395,750 1358,830",
      "1395,750 1425,775 1450,790",
      "1345,890 1310,885 1285,905 1320,930 1480,925",
      "1345,890 1400,860 1440,848",
      "1250,862 1270,920 1310,985 1335,1050 1360,1130 1385,1240 1385,1360",
      "1340,1045 1375,1040 1420,1030 1500,1020",
      "1358,1130 1400,1110 1420,1080 1425,1030",
      "1400,1140 1405,1270 1415,1330",
      "1465,1030 1465,1115",
      "1405,1270 1410,1300 1430,1290 1480,1270",
      "1430,1370 1480,1335 1490,1375 1530,1385 1540,1480",
      "1455,1365 1475,1465",
      "1430,1405 1430,1465 1470,1480 1475,1510",
      "1265,1325 1270,1400 1265,1440",
      "1165,1295 1130,1345",
      "1290,1280 1270,1325 1285,1350 1300,1335 1310,1380 1325,1395",
      "1310,1290 1340,1270 1375,1335",
      "1160,1320 1185,1400 1225,1470 1245,1470",
      "1105,1380 1100,1400 1130,1470 1180,1540",
      "1085,1430 1130,1500 1180,1545",
      "1185,1460 1210,1455 1240,1500",
      "1140,425 1150,530 1190,690 1250,862",
      "1100,560 1145,530",
      "1000,510 1060,505 1100,560 1115,630 1190,690",
      "1005,625 1065,610 1115,630 1140,680 1150,725 1165,730 1168,770 1150,800 1180,830 1220,795",
      "965,555 1000,510",
      "880,610 915,630 965,665 1005,625",
      "945,665 945,735 955,775 1005,800 1040,780 1070,800 1075,900 1085,920 1060,985 1040,990 1025,1055 945,1020",
      "945,735 890,795 880,830 918,960",
      "880,830 830,770 855,745 840,640",
      "820,965 860,935 900,935 918,960",
      "1060,985 1125,1065",
      "1105,870 1130,860 1145,915 1120,935 1125,1030",
      "945,1020 1000,1050 1030,1120 1040,1140",
      "945,1155 1000,1205 1030,1220",
      "1180,830 1205,970",
      "1208,968 1120,1085 1085,1130 1068,1135",
      "1135,800 1130,860",
      "640,1140 720,1290 740,1440",
    ],
  },
  {
    at: "translate(1690 780) scale(0.3333)",
    wards: [
      [GREEN, "30,40 276,40 276,1200 30,1200"],
      [TEAL, "30,150 75,175 78,215 60,235 70,290 30,300"],
      [BLUE, "185,180 205,165 240,155 276,150 276,290 250,300 245,280 215,265 195,225"],
      [LIME, "70,50 115,45 108,135 58,130"],
      [TEAL, "140,360 165,340 245,310 250,360 215,360 222,405 150,420 145,400"],
      ["#efefef", "30,330 65,320 85,340 100,350 115,370 90,405 105,433 55,430 30,425"],
      [GOLD, "65,315 90,295 105,290 115,335 135,370 145,400 120,405 105,433 90,405 115,370 100,350 85,340"],
      [TEAL, "45,432 100,436 165,450 240,485 233,520 240,570 276,600 276,620 215,630 170,630 130,610 100,582 78,570 90,535 40,475"],
      [TEAL, "130,610 170,630 215,630 276,620 276,720 210,740 170,725 150,680 125,650"],
      [TEAL, "210,740 276,720 276,860 240,855 215,790"],
      [TEAL, "30,815 45,840 45,875 30,900"],
      [TEAL, "220,1045 250,1000 276,1000 276,1200 180,1200 220,1090"],
      [LIME, "45,835 80,815 135,815 120,860 95,920 75,958 52,945 60,925 38,905"],
      [LIME, "200,880 240,860 276,875 276,1005 240,960 205,920"],
      [LIME, "205,920 252,990 220,1045 215,1055 175,1045 150,995"],
    ],
    lines: [
      "30,128 40,140 60,130 110,138 118,215 125,270",
      "115,45 112,65 190,65 192,50 170,40",
      "190,65 200,75 240,68 245,40",
      "112,120 140,115 185,130 200,155 205,165",
      "240,110 245,68",
      "276,98 240,110 235,150",
      "125,230 140,200 185,195 195,265 130,280 105,290",
      "245,300 190,270",
      "215,360 276,370",
      "222,405 276,405",
      "105,433 150,450 200,470 250,485 276,470",
      "160,520 276,600",
      "30,565 78,568 95,585",
      "30,630 60,620 90,600",
      "30,695 62,705 100,660 150,682",
      "58,695 75,720 30,750",
      "100,670 125,765 145,790 150,815 125,830 130,875 180,880 200,880",
      "125,765 212,762 238,850",
      "125,870 200,880 198,920 150,995 115,965 80,955",
      "30,1070 45,1100 175,1060 215,1055 220,1090",
      "45,1100 65,1185 30,1150",
      "215,1140 180,1190",
    ],
  },
  {
    at: "translate(1690 1180) scale(0.3333)",
    wards: [
      [GREEN, "30,0 276,0 276,1020 30,1020"],
      [TEAL, "160,0 165,38 200,45 276,70 276,0"],
      [TEAL, "30,78 85,110 130,100 120,130 170,170 170,210 120,250 105,240 75,235 60,205 30,180"],
      [TEAL, "30,205 60,205 75,235 105,240 120,255 100,305 55,325 50,350 30,340"],
      [TEAL, "120,255 170,210 235,285 190,320 175,325 170,310 150,375 100,430 55,350 100,305"],
      [TEAL, "205,255 250,210 276,235 276,300 255,305 235,285"],
      [TEAL, "235,285 255,300 276,300 276,370 190,445 130,420 175,325 190,320"],
      [TEAL, "100,430 130,410 135,425 175,430 190,450 130,475 125,500 135,515 130,548 60,578 60,530 75,480"],
      [TEAL, "30,630 60,630 130,655 215,668 255,695 260,715 200,735 165,765 178,795 155,810 120,790 92,790 70,770 60,820 30,800"],
      [LIME, "60,578 130,548 240,545 225,590 215,620 215,668 130,655 60,630"],
      [LIME, "240,545 276,540 276,705 255,695 215,668 215,620 225,590"],
      [LIME, "200,735 260,715 276,705 276,840 215,895 215,850 175,815 160,770"],
      [LIME, "30,800 60,815 30,885"],
    ],
    lines: [
      "68,0 100,55 130,100 155,40 165,38",
      "170,170 205,255",
      "215,180 250,210 276,150",
      "30,355 55,350 90,400 95,430 75,480 30,480",
      "215,895 276,930",
      "276,790 215,895",
    ],
  },
  {
    at: "translate(820 1000) scale(0.3367 0.3333)",
    wards: [
      [GREEN, "118,10 110,55 90,100 75,175 50,215 65,235 110,235 150,275 200,292 260,290 280,315 370,335 370,370 355,378 355,408 380,408 385,470 392,515 445,500 448,545 490,555 495,590 550,605 570,600 578,590 625,568 655,595 690,650 710,665 795,655 825,680 830,745 805,745 810,780 850,785 855,805 900,805 960,770 1000,765 1030,790 1100,845 1150,895 1158,900 1158,10"],
      [TEAL, "448,500 578,450 585,385 600,392 670,412 680,425 660,470 640,500 595,518 605,540 625,568 578,590 550,605 495,590 490,555 445,545"],
      [TEAL, "960,110 1020,125 1065,128 1090,160 968,265 945,210 938,175 945,140"],
      [LIME, "885,368 915,338 930,355 935,315 1085,305 1075,400"],
      [LIME, "820,600 885,535 945,555 985,655 845,670"],
      [LIME, "830,675 985,655 1040,670 1040,750 1050,770 1150,795 1158,900 1100,845 1030,790 1000,765 960,770 900,805 855,805 850,785 810,780 805,745 830,745"],
      [LIME, "1070,405 1158,395 1158,545 1110,540 1055,525 1090,460"],
    ],
    lines: [
      "655,10 630,70 640,150 665,195 600,228 525,280 510,325 475,330 462,365 390,345 370,338",
      "655,30 705,85 710,115 775,140 865,185 865,160 900,175 940,175",
      "775,140 770,205 778,275",
      "665,195 710,240 730,300 740,325 780,350 815,395 840,390 900,315 930,315",
      "730,300 778,275 830,250 945,208",
      "600,228 580,270 610,320 618,335 568,355 600,385",
      "670,412 795,378 815,398 830,430 870,460 915,455 945,470",
      "830,430 795,510 790,555 730,585 625,560 595,518",
      "885,368 1000,395 1075,405",
      "1020,400 990,435 880,525 1015,575 1050,525",
      "1040,670 1075,665 1085,620 1110,610 1115,590 1130,590 1120,550",
      "1150,140 930,315",
      "1115,150 1158,165",
      "1120,175 1100,230 1110,290 1085,305",
      "1100,290 1130,325 1158,325",
      "815,10 820,55 795,95 775,140",
      "850,10 850,55 815,55",
      "880,10 905,100 915,110 885,160 905,170",
      "935,10 930,65 970,75 975,95 1020,85 1025,125",
    ],
  },
  {
    at: "translate(1200 1100) scale(0.3712 0.3333)",
    wards: [
      [LIME, "55,1190 50,1295 75,1310 120,1290 195,1190"],
      [LIME, "615,1190 660,1260 710,1258 715,1190"],
      [GREEN, "905,1190 1568,1190 1568,1345 1510,1330 1440,1370 1450,1415 1410,1480 1040,1480 1015,1400 1000,1355 1030,1330 985,1295 985,1270 935,1245"],
      [LIME, "905,1190 935,1245 985,1270 985,1295 1030,1330 1075,1320 1090,1290 1065,1265 1115,1225 1085,1190"],
      [TEAL, "1085,1190 1115,1225 1170,1265 1185,1330 1230,1315 1220,1270 1250,1260 1270,1270 1300,1245 1330,1260 1315,1190"],
      [LIME, "1315,1190 1345,1255 1410,1300 1440,1265 1430,1278 1400,1275 1380,1190"],
      [GREEN, "1030,1330 1000,1355 1015,1400 1040,1480 1120,1480 1145,1400 1180,1380 1185,1330 1170,1265 1115,1225 1065,1265 1090,1290 1075,1320"],
      [LIME, "1120,1480 1145,1400 1170,1395 1185,1330 1230,1315 1300,1440 1310,1480"],
      [GREEN, "1220,1270 1250,1260 1270,1270 1300,1245 1340,1260 1410,1305 1440,1370 1450,1415 1410,1480 1310,1480 1230,1315"],
    ],
    lines: [],
  },
];

const WardMap = () => (
  <svg width="1231" height="1315" viewBox="551 275 1231 1315">
    {mapParts.map((part, i) => (
      <g key={i} transform={part.at}>
        {part.wards.map(([color, pts], j) => (
          <Ward key={j} points={pts} fill={color} />
        ))}
        {part.lines.map((pts, j) => (
          <Border key={j} points={pts} />
        ))}
      </g>
    ))}
  </svg>
);

/* ---------- content ---------- */

const PALETTE = ["#fde725", "#8fd744", "#35b779", "#21908c", "#31688e", "#443983", "#440154"];

const browserItems = [
  ["Favorites", "star", false],
  ["Home", "folderHome", true],
  ["/", "folderPlain", true],
  ["/Volumes", "folderPlain", true],
  ["GeoPackage", "geoSmall", false],
  ["SpatiaLite", "featherPale", false],
  ["PostGIS", "elephant", false],
  ["MSSQL", "sail", false],
  ["DB2", "db2", false],
  ["WMS/WMTS", "globe", false],
  ["XYZ Tiles", "globe", true],
];

const layerGroups = [
  {
    name: "ward_population_2019",
    active: true,
    h: 35,
    pitch: 36,
    flush: true,
    items: ["141 - 5488", "5488 - 10685", "10685 - 15881", "15881 - 21077", "21077 - 26273", "26273 - 31470", "31470 - 36666"],
  },
  {
    name: "ward_population_2015",
    h: 36,
    pitch: 40,
    items: [
      "141.0000 - 1934.0000",
      "1934.0000 - 9749.0000",
      "9749.0000 - 12235.0000",
      "12235.0000 - 14447.0000",
      "14447.0000 - 16447.0000",
      "16447.0000 - 18757.0000",
      "18757.0000 - 27615.0000",
    ],
  },
  { name: "ward_population_2011", h: 38, pitch: 40, items: ["226 - 5114", "5114 - 10152"] },
];

const layerMenu = [
  { icon: "zoomLayerMenu", key: "Z", text: "oom to Layer" },
  { icon: "zoomSelMenu", key: "Z", text: "oom to Selection", off: true },
  { icon: "glasses", key: "S", text: "how in Overview" },
  { icon: "square", text: "Show Feature Count" },
  { text: "Copy Layer" },
  { pre: "Re", key: "n", text: "ame Layer" },
  "rule",
  { icon: "duplicate", key: "D", text: "uplicate Layer" },
  { icon: "remove", key: "R", text: "emove Layer..." },
  "rule",
  { icon: "table", key: "O", text: "pen Attribute Table" },
  { icon: "pencil", text: "Toggle Editing" },
  { key: "F", text: "ilter..." },
  { text: "Change Data Source..." },
  "rule",
  { key: "S", text: "et Layer Scale Visibility..." },
  { text: "Set CRS", more: true },
  "rule",
  { text: "Export", more: true },
  "rule",
  { text: "Styles", more: true, on: true },
  { key: "P", text: "roperties..." },
];

const styleMenu = [
  { text: "Copy Style", more: true, on: true },
  "rule",
  { text: "Add..." },
  { text: "Rename Current..." },
  "rule",
  { text: "default", off: true, tick: true },
];

const categoryMenu = [
  { text: "All Style Categories" },
  "rule",
  { icon: "layerConfig", text: "Layer Configuration" },
  { icon: "brush", text: "Symbology", on: true },
  { icon: "cube", text: "3D Symbology" },
  { icon: "labels", text: "Labels" },
  { icon: "fields", text: "Fields" },
  { icon: "forms", text: "Forms" },
  { icon: "actions", text: "Actions" },
  { icon: "bubble", text: "Map Tips" },
  { icon: "diagram", text: "Diagrams" },
  { icon: "table", text: "Attribute Table Settings" },
  { icon: "broom", text: "Rendering" },
  { icon: "wrench", text: "Custom Properties" },
  { icon: "geomOpts", text: "Geometry Options" },
];

const MenuItems = ({ items }) =>
  items.map((item, i) =>
    item === "rule" ? (
      <MenuRule key={i} />
    ) : (
      <MenuRow key={i} $on={item.on} $off={item.off}>
        <MenuGlyph>
          {item.icon && <Icon name={item.icon} size={32} />}
          {item.tick && (
            <Tick>
              <Check />
            </Tick>
          )}
        </MenuGlyph>
        <span>
          {item.pre}
          {item.key && <Mnemonic>{item.key}</Mnemonic>}
          {item.text}
        </span>
        {item.more && <Chevron $on={item.on} />}
      </MenuRow>
    )
  );

const T = ({ name, w, dim }) => (
  <Tool $w={w}>
    <Icon name={name} dim={dim} />
  </Tool>
);

export default function App() {
  return (
    <Page>
      <GlobalStyle />
      <TitleBar>
        <Lights>
          <Light />
          <Light />
          <Light />
        </Lights>
        <Title>*w2-pop-analysis - QGIS</Title>
      </TitleBar>

      <ToolRow $h={76} $pad={9}>
        <T name="newDoc" />
        <T name="folder" />
        <T name="save" />
        <T name="layout" />
        <Gap $w={493} />
        <T name="zoomIn" />
        <T name="zoomFull" />
        <T name="zoom11" />
        <T name="zoomLast" w={68} />
        <T name="zoomNext" w={64} />
        <T name="scrollNew" w={68} />
        <T name="scrollPin" w={65} />
        <T name="scrollBook" />
        <T name="refresh" />
        <Grip $m={10} />
        <T name="identify" w={66} />
        <T name="action" w={64} />
        <SmallArrow $w={24} />
        <T name="select" />
        <SmallArrow $w={28} />
        <T name="deselect" />
        <SmallArrow $w={22} />
        <T name="yellowStop" />
      </ToolRow>

      <ToolRow $h={79} $pad={9} $top={3}>
        <T name="dataSource" />
        <T name="geoNew" />
        <T name="vertex" />
        <T name="featherNew" />
        <Gap $w={532} />
        <T name="edits" dim />
        <T name="trash" dim />
        <T name="scissors" dim />
        <T name="copy" dim />
        <T name="paste" dim w={65} />
        <T name="undo" dim w={67} />
        <T name="redo" dim w={67} />
        <Grip $m={9} />
        <T name="abc" />
        <T name="diagram" w={70} />
        <T name="abPin" w={64} />
        <T name="abGray" dim />
        <T name="abcEye" dim />
        <T name="abcArrow" dim w={68} />
        <T name="abcTurn" dim w={68} />
        <T name="abc" dim />
      </ToolRow>

      <ToolRow $h={76} $top={3}>
        <Grip />
        <Gap $w={17} />
        <Grip />
        <T name="bee" w={82} />
        <Grip $m={6} />
        <T name="greenSearch" w={64} />
        <T name="mapPencil" />
      </ToolRow>

      <Body>
        <Side>
          <DockTitle $h={45} $shift={-6}>
            Browser
          </DockTitle>
          <DockTools>
            <DockTool $w={40.5}>
              <Icon name="addSquare" size={44} />
            </DockTool>
            <DockTool>
              <Icon name="refresh" size={36} />
            </DockTool>
            <DockTool>
              <Icon name="funnel" size={38} />
            </DockTool>
            <DockTool>
              <Icon name="treeUp" size={36} />
            </DockTool>
            <DockTool>
              <Icon name="info" size={36} />
            </DockTool>
          </DockTools>
          <BrowserTree>
            {browserItems.map(([label, icon, more]) => (
              <TreeRow key={label}>
                <Disclosure $on={more} />
                <TreeIcon>
                  <Icon name={icon} size={33} />
                </TreeIcon>
                {label}
              </TreeRow>
            ))}
          </BrowserTree>
          <SplitHead>
            <SplitDots />
            <DockTitle $h={57} $top={12} $shift={-8}>
              Layers
            </DockTitle>
          </SplitHead>
          <DockTools>
            <DockTool $shift={-10}>
              <Icon name="brush" size={36} />
            </DockTool>
            <DockTool>
              <Icon name="attrAdd" size={38} />
            </DockTool>
            <DockTool>
              <Icon name="eye" size={38} />
            </DockTool>
            <DockTool>
              <Icon name="funnel" size={38} />
            </DockTool>
            <DockTool $w={52}>
              <Icon name="expr" size={38} />
            </DockTool>
            <SmallArrow $w={18} />
            <DockTool $w={44}>
              <Icon name="treeUp" size={36} />
            </DockTool>
          </DockTools>
          <LayerPane>
            <LayerList>
              {layerGroups.map((group) => (
                <React.Fragment key={group.name}>
                  <GroupRow $h={group.h} $active={group.active}>
                    <Twisty $active={group.active} />
                    <CheckBox>
                      <Check />
                    </CheckBox>
                    <LayerGlyph>
                      <Blob light={group.active} />
                    </LayerGlyph>
                    <LayerName $active={group.active}>{group.name}</LayerName>
                  </GroupRow>
                  {group.items.map((label, i) => (
                    <LegendRow key={label} $h={group.pitch}>
                      <CheckBox>
                        <Check />
                      </CheckBox>
                      <Swatch $color={PALETTE[i]} $flush={group.flush} />
                      <LegendText>{label}</LegendText>
                    </LegendRow>
                  ))}
                </React.Fragment>
              ))}
            </LayerList>
            <ScrollTrack>
              <ScrollThumb />
            </ScrollTrack>
            <Gutter>
              <GutterDots />
            </Gutter>
          </LayerPane>
        </Side>
        <Canvas>
          <WardMap />
        </Canvas>
      </Body>

      <Menu $x={288} $y={27} $w={524} $h={868}>
        <MenuItems items={layerMenu} />
      </Menu>
      <Menu $x={813} $y={797} $w={393} $h={207} $edges="0 1px 1px 0">
        <MenuItems items={styleMenu} />
      </Menu>
      <Menu $x={1206} $y={797} $w={494} $h={703}>
        <MenuItems items={categoryMenu} />
      </Menu>
    </Page>
  );
}
